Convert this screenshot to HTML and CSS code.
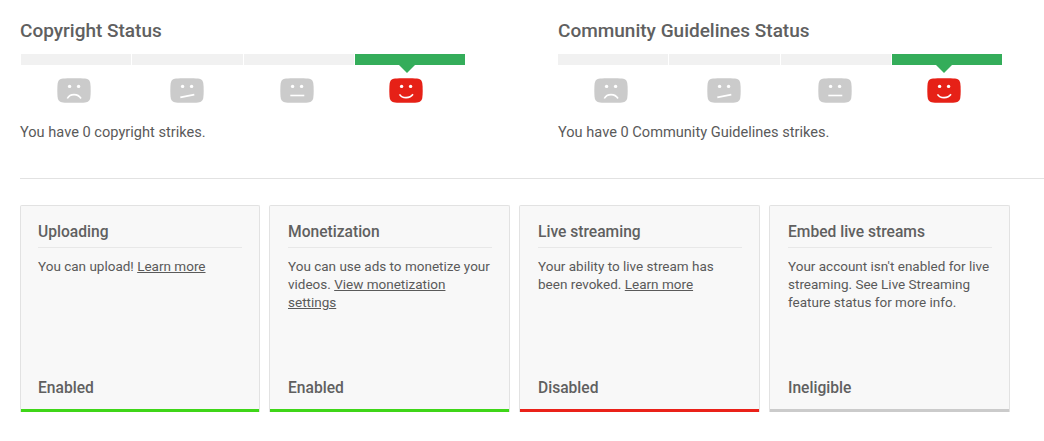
FILE: index.html
```html
<!DOCTYPE html>
<html lang="en">
<head>
    <meta charset="UTF-8">
    <title>Status and features</title>
    <link rel="stylesheet" href="styles.css">
</head>
<body>

    <svg class="defs" width="0" height="0">
        <symbol id="face" viewBox="0 0 34 25">
            <path d="M6 .6C10 .2 24 .2 28 .6 31.5 1 33 2.500 33.400 6 33.800 10 33.800 15 33.400 19 33 22.500 31.500 24 28 24.400 24 24.800 10 24.800 6 24.400 2.500 24 1 22.500.6 19 .2 15 .2 10 .6 6 1 2.500 2.500 1 6 .6Z"/>
            <circle class="eye" cx="12.600" cy="8.400" r="1.700"/>
            <circle class="eye" cx="21.600" cy="8.400" r="1.700"/>
        </symbol>
    </svg>

    <div class="status-row">
        <div class="status">
            <h2>Copyright Status</h2>
            <div class="bar">
                <span></span><span></span><span></span><span class="on"></span>
            </div>
            <div class="faces">
                <svg class="face f1" viewBox="0 0 34 25"><use href="#face"/><path class="mouth" d="M10.300 20.500C13 15.300 21 15.300 24 20.500"/></svg>
                <svg class="face f2" viewBox="0 0 34 25"><use href="#face"/><path class="mouth" d="M10.300 19.400 24.300 16.600"/></svg>
                <svg class="face f3" viewBox="0 0 34 25"><use href="#face"/><path class="mouth" d="M10.300 17.500H24.300"/></svg>
                <svg class="face f4 happy" viewBox="0 0 34 25"><use href="#face"/><path class="mouth" d="M10.500 16.300C13 20.700 21 20.700 24 16.300"/></svg>
            </div>
            <p>You have 0 copyright strikes.</p>
        </div>
        <div class="status second">
            <h2>Community Guidelines Status</h2>
            <div class="bar">
                <span></span><span></span><span></span><span class="on"></span>
            </div>
            <div class="faces">
                <svg class="face f1" viewBox="0 0 34 25"><use href="#face"/><path class="mouth" d="M10.300 20.500C13 15.300 21 15.300 24 20.500"/></svg>
                <svg class="face f2" viewBox="0 0 34 25"><use href="#face"/><path class="mouth" d="M10.300 19.400 24.300 16.600"/></svg>
                <svg class="face f3" viewBox="0 0 34 25"><use href="#face"/><path class="mouth" d="M10.300 17.500H24.300"/></svg>
                <svg class="face f4 happy" viewBox="0 0 34 25"><use href="#face"/><path class="mouth" d="M10.500 16.300C13 20.700 21 20.700 24 16.300"/></svg>
            </div>
            <p>You have 0 Community Guidelines strikes.</p>
        </div>
    </div>

    <hr class="divider">

    <div class="cards">
        <div class="card green">
            <h3>Uploading</h3>
            <p class="text">You can upload! <a href="#">Learn more</a></p>
            <div class="state">Enabled</div>
        </div>
        <div class="card green">
            <h3>Monetization</h3>
            <p class="text">You can use ads to monetize your videos. <a href="#">View monetization settings</a></p>
            <div class="state">Enabled</div>
        </div>
        <div class="card red">
            <h3>Live streaming</h3>
            <p class="text">Your ability to live stream has been revoked. <a href="#">Learn more</a></p>
            <div class="state">Disabled</div>
        </div>
        <div class="card grey">
            <h3>Embed live streams</h3>
            <p class="text">Your account isn't enabled for live streaming. See Live Streaming feature status for more info.</p>
            <div class="state">Ineligible</div>
        </div>
    </div>

</body>
</html>
```
FILE: styles.css
```css
body {
    font-family: Roboto, Arial, sans-serif;
    font-size: 14.600px;
    color: #5a5a5a;
    background-color: white;
    margin: 0;
    padding: 20px 0 0 20px;
    overflow: hidden;
}

.defs {
    display: block;
    height: 0;
}

.status-row {
    display: flex;
}

.status {
    flex: 0 0 538px;
}

h2 {
    font-size: 19px;
    font-weight: 500;
    line-height: 21px;
    margin: 0;
    color: #606060;
}

.bar {
    display: flex;
    gap: 1px;
    margin: 13px 0 0 1px;
    width: 444px;
}

.second .bar {
    margin-left: 0;
}

.bar span {
    flex: 1;
    height: 11px;
    background-color: #f1f1f1;
}

.bar .on {
    position: relative;
    background-color: #34ad5a;
}

/* little arrow under the active segment */
.bar .on::after {
    content: "";
    position: absolute;
    left: 44px;
    top: 11px;
    border-left: 8px solid transparent;
    border-right: 8px solid transparent;
    border-top: 8px solid #34ad5a;
}

.faces {
    display: flex;
    margin-top: 13px;
    height: 25px;
}

.face {
    width: 34px;
    height: 25px;
    fill: #cbcbcb;
}

.face.happy {
    fill: #e62117;
}

.eye {
    fill: white;
}

.mouth {
    fill: none;
    stroke: white;
    stroke-width: 1.600;
}

.f1 {
    margin-left: 37px;
}

.second .f1 {
    margin-left: 36px;
}

.f2 {
    margin-left: 79px;
}

.f3 {
    margin-left: 76px;
}

.second .f3 {
    margin-left: 77px;
}

.f4 {
    margin-left: 75px;
}

.status p {
    margin: 19px 0 0;
    line-height: 20px;
}

.divider {
    border: none;
    border-top: 1px solid #e2e2e2;
    margin: 36px 0 26px;
}

.cards {
    display: flex;
    gap: 9px;
}

.card {
    box-sizing: border-box;
    display: flex;
    flex-direction: column;
    width: 240px;
    height: 207px;
    padding: 0 17px;
    background-color: #f8f8f8;
    border: 1px solid #e2e2e2;
    border-bottom: none;
    border-radius: 2px 2px 0 0;
}

.card + .card {
    width: 241px;
    padding-left: 18px;
}

/* status colour sits between the side borders */
.card.green {
    box-shadow: inset 0 -3px 0 #3fd618;
}

.card.red {
    box-shadow: inset 0 -3px 0 #ea2119;
}

.card.grey {
    box-shadow: inset 0 -3px 0 #cbcbcb;
}

.card h3 {
    font-size: 15.600px;
    font-weight: 500;
    line-height: 19px;
    margin: 17px 0 0;
    padding-bottom: 5px;
    border-bottom: 1px solid #e8e8e8;
    color: #606060;
}

.text {
    font-size: 13.500px;
    margin: 9px 0 0;
    line-height: 18px;
    flex: 1;
}

.text a {
    color: #5a5a5a;
}

.state {
    font-size: 15.600px;
    font-weight: 500;
    line-height: 19px;
    margin-bottom: 14px;
    color: #606060;
}
```
